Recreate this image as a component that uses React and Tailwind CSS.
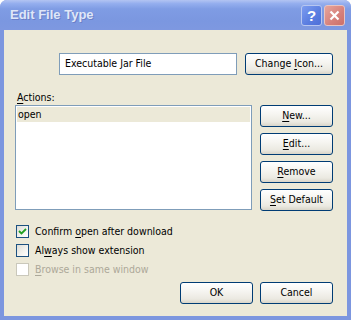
import React from "react";

const F = { fontFamily: '"DejaVu Sans Condensed","DejaVu Sans",sans-serif' };

function XPButton({ children, className = "" }) {
  return (
    <div
      className={
        "flex items-center justify-center h-[22px] rounded-[3px] border border-[#003C74] text-[10.5px] text-black bg-[linear-gradient(to_bottom,#ffffff_0%,#f6f5f1_40%,#ebe9e1_80%,#d9d5c9_100%)] " +
        className
      }
    >
      <span className="whitespace-pre">{children}</span>
    </div>
  );
}

function CheckBox({ checked, disabled, children }) {
  return (
    <div className="flex items-center h-[19px]">
      <div
        className={
          "w-[13px] h-[13px] border flex items-center justify-center " +
          (disabled
            ? "border-[#CAC8BB] bg-white"
            : "border-[#1C5180] bg-[linear-gradient(135deg,#dcdcd7_0%,#f4f4f0_60%,#ffffff_100%)]")
        }
      >
        {checked && (
          <svg width="9" height="9" viewBox="0 0 9 9">
            <path d="M1 4 L3.5 6.5 L8 2" stroke="#21A121" strokeWidth="1.8" fill="none" />
          </svg>
        )}
      </div>
      <span className={"ml-[6px] text-[10.5px] " + (disabled ? "text-[#ACA899]" : "text-black")}>
        {children}
      </span>
    </div>
  );
}

export default function App() {
  return (
    <div
      className="w-[351px] h-[320px] flex flex-col rounded-t-[7px] bg-[#7C96DF] overflow-hidden"
      style={F}
    >
      {/* Title bar */}
      <div className="h-[30px] flex items-center pl-[10px] pr-[6px] bg-[linear-gradient(to_bottom,#b3c4f2_0%,#94aeee_12%,#7f9ce4_30%,#7b97e0_70%,#7e98e0_100%)]">
        <span
          className="flex-1 text-[13px] font-bold text-[#dfe6f8] [text-shadow:1px_1px_0_#6a7fc8]"
          style={{ fontFamily: '"Liberation Sans",Arial,sans-serif' }}
        >
          Edit File Type
        </span>
        <div className="w-[21px] h-[21px] rounded-[3px] border border-[#b7c6f0] bg-[linear-gradient(135deg,#7c9cf0_0%,#5a7de0_60%,#4d6fd8_100%)] flex items-center justify-center">
          <span
            className="text-white font-bold text-[15px] leading-none"
            style={{ fontFamily: '"Liberation Sans",Arial,sans-serif' }}
          >
            ?
          </span>
        </div>
        <div className="ml-[2px] w-[21px] h-[21px] rounded-[3px] border border-[#e8c4c0] bg-[linear-gradient(135deg,#e6a59c_0%,#d6807a_60%,#cc7068_100%)] flex items-center justify-center">
          <svg width="11" height="11" viewBox="0 0 11 11">
            <path d="M1.5 1.5 L9.5 9.5 M9.5 1.5 L1.5 9.5" stroke="#ffffff" strokeWidth="2.2" />
          </svg>
        </div>
      </div>

      {/* Client area */}
      <div className="flex-1 mx-[4px] mb-[4px] bg-[#ECE9D8] pl-[11px] pr-[14px] pt-[23px] flex flex-col">
        <div className="flex items-center">
          <div className="ml-[44px] w-[178px] h-[22px] border border-[#7F9DB9] bg-white flex items-center pl-[5px] text-[10.5px] text-black">
            Executable Jar File
          </div>
          <XPButton className="ml-[8px] w-[88px]">
            Change <u className="underline underline-offset-2">I</u>con...
          </XPButton>
        </div>

        <div className="mt-[16px] ml-[2px] h-[13px] leading-[13px] text-[10.5px] text-black">
          <u className="underline underline-offset-2">A</u>ctions:
        </div>

        <div className="mt-[1px] flex">
          <div className="w-[237px] h-[105px] border border-[#7F9DB9] bg-white p-[1px]">
            <div className="h-[15px] bg-[#ECE9D8] flex items-center pl-[1px] text-[10.5px] text-black">
              open
            </div>
          </div>
          <div className="ml-[8px] flex flex-col gap-[6px]">
            <XPButton className="w-[73px]">
              <u className="underline underline-offset-2">N</u>ew...
            </XPButton>
            <XPButton className="w-[73px]">
              <u className="underline underline-offset-2">E</u>dit...
            </XPButton>
            <XPButton className="w-[73px]">
              <u className="underline underline-offset-2">R</u>emove
            </XPButton>
            <XPButton className="w-[73px]">
              <u className="underline underline-offset-2">S</u>et Default
            </XPButton>
          </div>
        </div>

        <div className="mt-[11px] ml-[1px] flex flex-col">
          <CheckBox checked>
            Confirm <u className="underline underline-offset-2">o</u>pen after download
          </CheckBox>
          <CheckBox>
            Al<u className="underline underline-offset-2">w</u>ays show extension
          </CheckBox>
          <CheckBox disabled>
            <u className="underline underline-offset-2">B</u>rowse in same window
          </CheckBox>
        </div>

        <div className="mt-[3px] flex justify-end gap-[7px]">
          <XPButton className="w-[73px]">OK</XPButton>
          <XPButton className="w-[73px]">Cancel</XPButton>
        </div>
      </div>
    </div>
  );
}
